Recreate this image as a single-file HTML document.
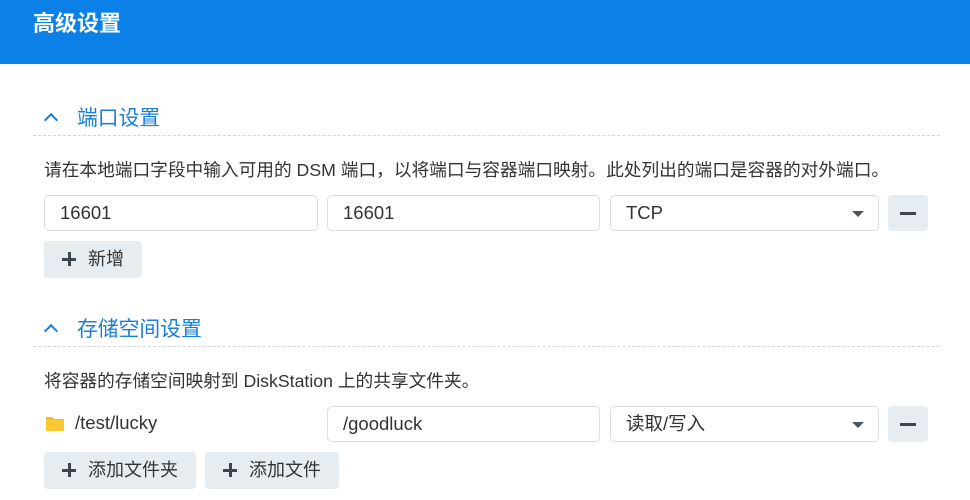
<!DOCTYPE html><html><head><meta charset="utf-8"><style>
*{box-sizing:border-box;margin:0;padding:0}
body{width:970px;height:500px;background:#fff;font-family:"Liberation Sans","Noto Sans CJK SC",sans-serif;color:#333;position:relative;overflow:hidden}
.a{position:absolute}
.hdr{left:0;top:0;width:970px;height:64px;background:#0b80e6}
.title{left:33px;top:6px;color:#fff;font-size:22px;font-weight:bold}
.sec{color:#1a7fd6;font-size:20.8px}
.dash{left:33px;width:907px;border-top:1px dashed #d4d8dc;height:0}
.desc{left:44px;font-size:17.7px;color:#333;white-space:nowrap}
.in{border:1px solid #d9dee3;border-radius:5px;height:36px;font-size:18.5px;padding-left:15px;line-height:34px;color:#333;background:#fff}
.caret{position:absolute;right:14px;top:15px;width:0;height:0;border-left:6px solid transparent;border-right:6px solid transparent;border-top:6px solid #4a5560}
.btn{background:#e6ecf0;border-radius:4px;height:37px;font-size:18px;line-height:37px;color:#333}
.minus{width:40px;height:36px;background:#e6ecf0;border-radius:4px}
.minus:after{content:"";position:absolute;left:12px;top:17px;width:16px;height:2.5px;background:#3c464f}
.plus{position:absolute;left:18px;top:11px;width:14px;height:14px}
.plus:before{content:"";position:absolute;left:0;top:6px;width:14px;height:2.5px;background:#3c464f}
.plus:after{content:"";position:absolute;left:6px;top:0;width:2.5px;height:14px;background:#3c464f}
.chev{width:10px;height:10px;border-left:2.5px solid #1a7fd6;border-top:2.5px solid #1a7fd6;transform:rotate(45deg)}
</style></head><body>
<div class="a hdr"></div>
<div class="a title">高级设置</div>

<div class="a chev" style="left:46px;top:115px"></div>
<div class="a sec" style="left:77px;top:101px">端口设置</div>
<div class="a dash" style="top:135px"></div>
<div class="a desc" style="top:156px">请在本地端口字段中输入可用的 DSM 端口，以将端口与容器端口映射。此处列出的端口是容器的对外端口。</div>
<div class="a in" style="left:44px;top:195px;width:274px">16601</div>
<div class="a in" style="left:327px;top:195px;width:273px">16601</div>
<div class="a in" style="left:610px;top:195px;width:269px">TCP<span class="caret"></span></div>
<div class="a minus" style="left:888px;top:195px"></div>
<div class="a btn" style="left:44px;top:241px;width:98px"><span class="plus"></span><span style="position:absolute;left:44px">新增</span></div>

<div class="a chev" style="left:46px;top:326px"></div>
<div class="a sec" style="left:77px;top:312px">存储空间设置</div>
<div class="a dash" style="top:346px"></div>
<div class="a desc" style="top:367px">将容器的存储空间映射到 DiskStation 上的共享文件夹。</div>
<svg class="a" style="left:45px;top:415px" width="20" height="17" viewBox="0 0 20 17"><path d="M1 2h6l2 2h10v12H1z" fill="#f5b820"/><path d="M1 5h18v11H1z" fill="#fcc934"/></svg>
<div class="a" style="left:75px;top:412px;font-size:18.5px">/test/lucky</div>
<div class="a in" style="left:327px;top:406px;width:273px">/goodluck</div>
<div class="a in" style="left:610px;top:406px;width:269px">读取/写入<span class="caret"></span></div>
<div class="a minus" style="left:888px;top:406px"></div>
<div class="a btn" style="left:44px;top:452px;width:152px"><span class="plus"></span><span style="position:absolute;left:44px">添加文件夹</span></div>
<div class="a btn" style="left:205px;top:452px;width:134px"><span class="plus"></span><span style="position:absolute;left:44px">添加文件</span></div>
</body></html>
